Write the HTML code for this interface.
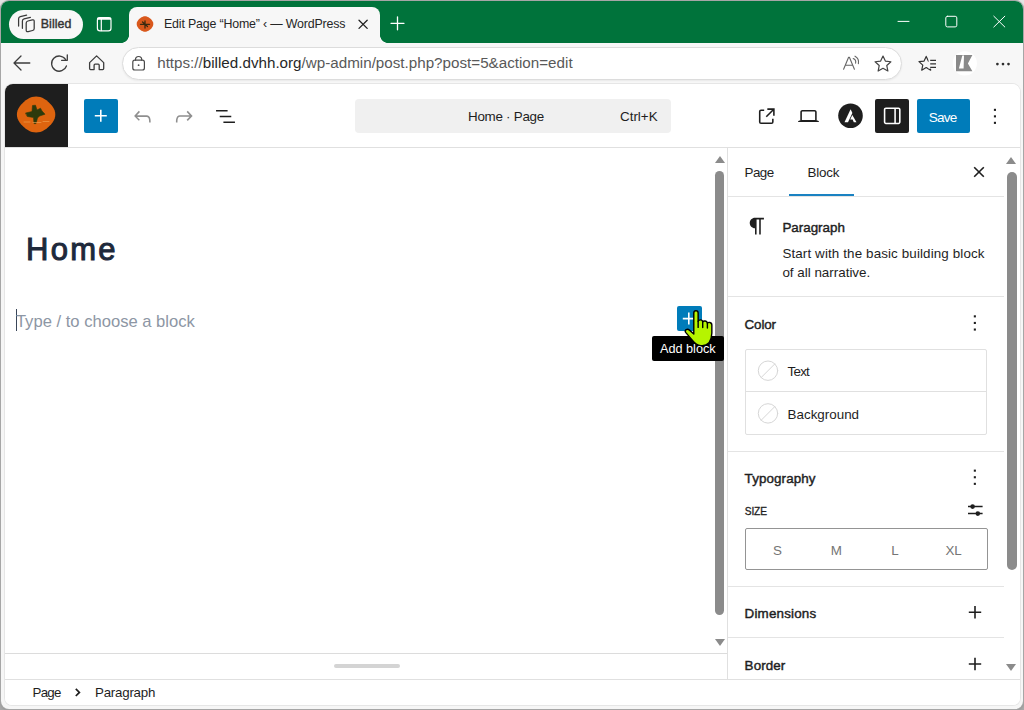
<!DOCTYPE html>
<html><head><meta charset="utf-8">
<style>
*{box-sizing:border-box;margin:0;padding:0}
html,body{width:1024px;height:710px;overflow:hidden;background:linear-gradient(#e4e4e4,#c0c0c0 20%,#a8a8a8);font-family:"Liberation Sans",sans-serif;}
.abs{position:absolute}
svg{position:absolute;overflow:visible}
#win{position:absolute;left:1px;top:1px;width:1021.6px;height:707.7px;border-radius:8px;background:#f6f6f6;overflow:hidden;box-shadow:0 0 0 1px #a6a6a6, 0 1px 2px 1px #999;}
/* coordinates inside #win are page coords minus 1 */
#title{left:0;top:0;width:100%;height:41.5px;background:#00733b;}
#pill{left:8px;top:8.9px;width:74px;height:29px;border-radius:14.5px;background:#f7f7f7;}
#pill span{position:absolute;left:31.7px;top:7.2px;font-size:12.4px;font-weight:normal;-webkit-text-stroke:.4px #333;color:#333;letter-spacing:.1px}
#tab{left:128px;top:6px;width:251px;height:37px;background:#f7f7f7;border-radius:8px 8px 0 0;}
#tab:before,#tab:after{content:"";position:absolute;bottom:1.5px;width:8px;height:8px;}
#tab:before{left:-8px;background:radial-gradient(circle at 0 0,transparent 7.6px,#f7f7f7 8.2px)}
#tab:after{right:-8px;background:radial-gradient(circle at 100% 0,transparent 7.6px,#f7f7f7 8.2px)}
#tabtxt{left:35px;top:10px;font-size:12.4px;color:#262626;white-space:nowrap;letter-spacing:-.17px}
#nav{left:0;top:41.5px;width:100%;height:42px;background:#f7f7f7}
#addr{left:121px;top:4.5px;width:780px;height:33px;border-radius:16.5px;background:#fff;border:1px solid #dcdcdc;box-shadow:0 1px 2px rgba(0,0,0,.06)}
#url{left:34.2px;top:5.7px;font-size:15.2px;color:#595959;white-space:nowrap}#url b{font-weight:normal;color:#272727}
#content{left:4px;top:83px;width:1014.5px;height:621.1px;background:#fff;border-radius:8px 8px 7px 7px;overflow:hidden;box-shadow:0 0 0 1px #e6e6e6;}
/* coordinates inside #content are page coords minus (5,84) */
#wphead{left:0;top:0;width:100%;height:64px;border-bottom:1px solid #e0e0e0;background:#fff}
#logo{left:0;top:0;width:62.7px;height:63px;background:#1e1e1e}
#plus{left:79px;top:15.2px;width:33.6px;height:33.4px;background:#007cba;border-radius:2px}
#cmd{left:349.5px;top:15.3px;width:316px;height:33.3px;background:#f0f0f0;border-radius:4px;font-size:13.4px;color:#1e1e1e;white-space:nowrap}
#save{left:911.8px;top:15.2px;width:52.9px;height:33.4px;background:#007cba;border-radius:2px;color:#fff;font-size:13.5px;letter-spacing:-.75px;text-align:center;line-height:37px;text-indent:-1.2px}
#sbbtn{left:870.3px;top:15.2px;width:33.7px;height:33.4px;background:#1e1e1e;border-radius:2px}
#h1{left:21px;top:148px;font-size:31px;font-weight:normal;-webkit-text-stroke:1px #1e293b;color:#1e293b;letter-spacing:2.3px;line-height:36px}
#ph{left:10.9px;top:227.8px;font-size:16.6px;color:#8d96a4;white-space:nowrap;line-height:20px}
#caret{left:10.6px;top:224.5px;width:1.2px;height:22px;background:#3a4658}
#ins{left:672px;top:222px;width:25px;height:25px;background:#007cba;border-radius:2px}
#tip{left:646.6px;top:251.6px;width:72.4px;height:25.6px;background:#000;border-radius:2px;color:#fff;font-size:12.7px;line-height:27.4px;text-align:center;white-space:nowrap}
#side{left:722px;top:64px;width:293px;height:532px;border-left:1px solid #e0e0e0;background:#fff}
/* coordinates inside #side are page coords minus (728,148) */
#foot1{left:0;top:568.5px;width:722px;height:27px;border-top:1px solid #dcdcdc;background:#fff}
#handle{left:329px;top:10.5px;width:66px;height:4px;border-radius:2px;background:#d4d4d4}
#foot2{left:0;top:595px;width:100%;height:27px;border-top:1px solid #e0e0e0;background:#fff;font-size:13.3px;color:#1e1e1e;white-space:nowrap}
.thumb{background:#8b8b8b;border-radius:5px}
.t{font-size:13.4px;color:#1e1e1e;white-space:nowrap;line-height:16px}
.b{font-weight:normal;-webkit-text-stroke:.42px #1e1e1e}
.hr{height:1px;background:#e4e4e4;left:0;width:276px}
.tri-u{width:0;height:0;border-left:5.2px solid transparent;border-right:5.2px solid transparent;border-bottom:7.5px solid #8b8b8b}
.tri-d{width:0;height:0;border-left:5.2px solid transparent;border-right:5.2px solid transparent;border-top:7.5px solid #8b8b8b}
</style></head><body>
<div id="win">
 <div id="title" class="abs">
  <div id="pill" class="abs"><span>Billed</span></div>
  <div id="tab" class="abs"><div id="tabtxt" class="abs">Edit Page “Home” ‹ — WordPress</div></div>
 </div>
 <div id="nav" class="abs">
  <div id="addr" class="abs"><div id="url" class="abs">https://<b>billed.dvhh.org</b>/wp-admin/post.php?post=5&amp;action=edit</div></div>
 </div>
 <div id="content" class="abs">
  <div id="wphead" class="abs">
   <div id="logo" class="abs"></div>
   <div id="plus" class="abs"></div>
   <div id="cmd" class="abs"><span class="abs" style="left:113.5px;top:9.5px;letter-spacing:-.27px">Home · Page</span><span class="abs" style="left:265.5px;top:9.5px">Ctrl+K</span></div>
   <div id="sbbtn" class="abs"></div>
   <div id="save" class="abs">Save</div>
  </div>
  <div id="h1" class="abs">Home</div>
  <div id="caret" class="abs"></div>
  <div id="ph" class="abs">Type / to choose a block</div>
  <div id="ins" class="abs"></div>
  <!-- canvas scrollbar -->
  <div class="abs tri-u" style="left:709.5px;top:71.5px"></div>
  <div class="abs thumb" style="left:710.3px;top:87px;width:8.8px;height:444px"></div>
  <div class="abs tri-d" style="left:709.5px;top:554.5px"></div>
  <div id="tip" class="abs">Add block</div>
  <div id="side" class="abs">
   <div class="abs t" style="left:16.6px;top:16.9px;letter-spacing:-.55px">Page</div>
   <div class="abs t" style="left:79.6px;top:16.9px;letter-spacing:-.25px">Block</div>
   <div class="abs" style="left:61px;top:46.4px;width:65px;height:2.3px;background:#1a82c2"></div>
   <div class="abs hr" style="top:48px"></div>
   <div class="abs t b" style="left:54.4px;top:72px;letter-spacing:0px">Paragraph</div>
   <div class="abs t" style="left:54.4px;top:97.5px;letter-spacing:.12px">Start with the basic building block</div>
   <div class="abs t" style="left:54.4px;top:116.6px">of all narrative.</div>
   <div class="abs hr" style="top:148px"></div>
   <div class="abs t b" style="left:16.6px;top:168.6px;letter-spacing:-.15px">Color</div>
   <div class="abs" style="left:17px;top:201px;width:242px;height:85.5px;border:1px solid #e0e0e0;border-radius:2px"></div>
   <div class="abs" style="left:17px;top:243px;width:242px;height:1px;background:#e0e0e0"></div>
   <div class="abs t" style="left:59.6px;top:216.2px;letter-spacing:-.8px">Text</div>
   <div class="abs t" style="left:59.6px;top:259.2px">Background</div>
   <div class="abs hr" style="top:302.5px"></div>
   <div class="abs t b" style="left:16.6px;top:322.5px;letter-spacing:.1px">Typography</div>
   <div class="abs t b" style="left:16.8px;top:356.1px;font-size:10.2px;letter-spacing:-.15px;-webkit-text-stroke-width:.3px">SIZE</div>
   <div class="abs" style="left:16.7px;top:380px;width:243px;height:41.7px;border:1px solid #949494;border-radius:2px"></div>
   <div class="abs t" style="left:29.5px;top:394.8px;width:40px;text-align:center;color:#757575">S</div>
   <div class="abs t" style="left:88.4px;top:394.8px;width:40px;text-align:center;color:#757575">M</div>
   <div class="abs t" style="left:147px;top:394.8px;width:40px;text-align:center;color:#757575">L</div>
   <div class="abs t" style="left:205.6px;top:394.8px;width:40px;text-align:center;color:#757575">XL</div>
   <div class="abs hr" style="top:438px"></div>
   <div class="abs t b" style="left:16.6px;top:457.7px;letter-spacing:.17px">Dimensions</div>
   <div class="abs hr" style="top:489px"></div>
   <div class="abs t b" style="left:16.6px;top:509.7px;letter-spacing:.1px">Border</div>
   <!-- sidebar scrollbar -->
   <div class="abs tri-u" style="left:278.4px;top:8.6px"></div>
   <div class="abs thumb" style="left:279px;top:24.4px;width:9.6px;height:397.6px"></div>
   <div class="abs tri-d" style="left:278.4px;top:516px"></div>
  </div>
  <div id="foot1" class="abs"><div id="handle" class="abs"></div></div>
  <div id="foot2" class="abs"><span class="abs" style="left:27.5px;top:5px;letter-spacing:-.7px">Page</span><span class="abs" style="left:90px;top:5px;letter-spacing:-.22px">Paragraph</span></div>
 </div>
</div>
<svg id="ov" width="1024" height="710" viewBox="0 0 1024 710" style="left:0;top:0;z-index:5" fill="none" stroke-linecap="round" stroke-linejoin="round">
<g stroke="#3a3a3a" stroke-width="1.25" transform="translate(0,.5)">
<path d="M26.2,22.6 Q26.2,20.9 27.9,20.5 L32.3,19.4 Q34.2,19 34.2,20.8 V28 Q34.2,29.6 32.6,30 L28.2,31.1 Q26.2,31.5 26.2,29.7 Z"/>
<path d="M22.4,27.8 V20.4 Q22.4,18.7 24.1,18.3 L30.4,16.8"/>
<path d="M18.6,25.6 V18.2 Q18.6,16.5 20.3,16.1 L26.6,14.7"/>
</g>
<g stroke="#fff" stroke-width="1.2"><rect x="97.4" y="17.6" width="13.6" height="13.2" rx="2.6"/><path d="M101.3,19V30.6"/><path d="M98.2,18.6H110.2" stroke-width="2.2"/></g>
<path d="M150.54,29.14 L149.48,30.04 L148.59,30.66 L147.70,31.12 L146.80,31.44 L145.90,31.64 L145.00,31.70 L144.10,31.64 L143.20,31.44 L142.30,31.12 L141.41,30.66 L140.52,30.04 L139.46,29.14 L138.48,28.16 L137.82,27.33 L137.33,26.50 L136.98,25.67 L136.77,24.84 L136.70,24.00 L136.77,23.16 L136.98,22.33 L137.33,21.50 L137.82,20.67 L138.48,19.84 L139.46,18.86 L140.52,17.96 L141.41,17.34 L142.30,16.88 L143.20,16.56 L144.10,16.36 L145.00,16.30 L145.90,16.36 L146.80,16.56 L147.70,16.88 L148.59,17.34 L149.48,17.96 L150.54,18.86 L151.52,19.84 L152.18,20.67 L152.67,21.50 L153.02,22.33 L153.23,23.16 L153.30,24.00 L153.23,24.84 L153.02,25.67 L152.67,26.50 L152.18,27.33 L151.52,28.16Z" fill="#d9581c" stroke="none"/>
<path d="M140.5,24.3H149.5M145,21V28M142.5,22 L147.5,26.5" stroke="#3a2a10" stroke-width="1.3"/>
<path d="M359,20.2 L367.2,28.4 M367.2,20.2 L359,28.4" stroke="#1f1f1f" stroke-width="1.25"/>
<path d="M391,23.3H404 M397.5,16.8V29.8" stroke="#fff" stroke-width="1.3"/>
<g stroke="#fff" stroke-width="1"><path d="M898,21.4H909"/><rect x="945.8" y="16.3" width="11" height="10.6" rx="1.6"/><path d="M993.8,16.2 L1004.8,27 M1004.8,16.2 L993.8,27"/></g>
<g stroke="#3d3d3d" stroke-width="1.3">
<path d="M14.2,63H29.8 M21,56 L14,63 L21,70"/>
<path d="M65.65,59.57 A7.6,7.6 0 1 0 66.43,65.95"/>
<path d="M61.6,60.3H67.3V54.8"/>
<path d="M89.6,62.6 L96.6,55.9 L103.7,62.6 V68.6 Q103.7,69.6 102.7,69.6 H99.2 V65.2 Q99.2,64.2 98.2,64.2 H95.1 Q94.1,64.2 94.1,65.2 V69.6 H90.6 Q89.6,69.6 89.6,68.6 Z"/>
</g>
<g stroke="#4a4a4a" stroke-width="1.2"><rect x="132.8" y="60.2" width="11.6" height="9.8" rx="2"/><path d="M135.5,60.2V59.6 A3.1,3.1 0 0 1 141.7,59.6 V60.2"/><circle cx="138.6" cy="65.2" r=".9" fill="#4a4a4a" stroke="none"/></g>
<g stroke="#666" stroke-width="1.1"><path d="M843.6,69.2 L848.6,57.2 H849.4 L854.4,69.2 M845.4,65.2H852.6"/><path d="M853.2,58.6 A4,4 0 0 1 855.6,63.2"/><path d="M855,56.2 A7,7 0 0 1 858.4,63.6"/></g>
<path d="M883.00,56.00 L885.35,61.06 L890.89,61.74 L886.80,65.54 L887.88,71.01 L883.00,68.30 L878.12,71.01 L879.20,65.54 L875.11,61.74 L880.65,61.06Z" stroke="#444" stroke-width="1.2"/>
<path d="M926.20,56.40 L928.32,61.09 L933.43,61.65 L929.62,65.11 L930.67,70.15 L926.20,67.60 L921.73,70.15 L922.78,65.11 L918.97,61.65 L924.08,61.09Z" stroke="#333" stroke-width="1.2"/>
<rect x="928.6" y="58.4" width="9" height="10.2" fill="#f7f7f7" stroke="none"/>
<path d="M930.2,60.3H936 M930.2,63.8H936 M930.2,67.3H936" stroke="#333" stroke-width="1.2" stroke-linecap="butt"/>
<circle cx="964.8" cy="63.4" r="12.1" fill="#fff" stroke="none"/>
<path d="M956,55H972.4L967.9,63.6L972.4,71.2H956Z M962.3,55.6H964L963.6,68.6H958.9Z" fill="#8a8a8a" fill-rule="evenodd" stroke="none"/>
<g fill="#2e2e2e" stroke="none"><circle cx="997.4" cy="64.1" r="1.35"/><circle cx="1003" cy="64.1" r="1.35"/><circle cx="1008.5" cy="64.1" r="1.35"/></g>
<path d="M48.91,126.51 L46.47,128.63 L44.39,130.07 L42.34,131.14 L40.28,131.90 L38.19,132.35 L36.10,132.50 L34.01,132.35 L31.92,131.90 L29.86,131.14 L27.81,130.07 L25.73,128.63 L23.29,126.51 L21.03,124.23 L19.50,122.28 L18.35,120.35 L17.54,118.41 L17.06,116.46 L16.90,114.50 L17.06,112.54 L17.54,110.59 L18.35,108.65 L19.50,106.72 L21.03,104.77 L23.29,102.49 L25.73,100.37 L27.81,98.93 L29.86,97.86 L31.92,97.10 L34.01,96.65 L36.10,96.50 L38.19,96.65 L40.28,97.10 L42.34,97.86 L44.39,98.93 L46.47,100.37 L48.91,102.49 L51.17,104.77 L52.70,106.72 L53.85,108.65 L54.66,110.59 L55.14,112.54 L55.30,114.50 L55.14,116.46 L54.66,118.41 L53.85,120.35 L52.70,122.28 L51.17,124.23Z" fill="#de640f" stroke="none"/>
<path d="M25.8,113 L32,111.5 L32.5,105.5 L35.5,105.2 L37,110 L40.5,108.2 L42,111 L45,114.2 L39.5,116 L37.5,118 L36,123.6 L34,123.6 L33.5,117.5 L27.5,116.5 Z" fill="#2c3a0c" stroke="#2c3a0c" stroke-width=".6"/>
<path d="M24,122H30M33,122.5H41M43,121.5H49" stroke="#f0a050" stroke-width=".8" opacity=".8"/>
<path d="M94.8,115.8H106.8 M100.8,109.8V121.8" stroke="#fff" stroke-width="1.6" stroke-linecap="butt"/>
<g fill="#8f8f8f" stroke="none"><path transform="translate(129.9,104) scale(1.05)" d="M18.3 11.7c-.6-.6-1.4-.9-2.300-.9H6.700l2.900-3.300-1.100-1-4.500 5L8.500 16l1-1-2.700-2.700H16c.5 0 .9.2 1.300.5 1 1 1 3.400 1 4.500v.3h1.500v-.2c0-1.500 0-4.300-1.500-5.700z"/>
<path transform="translate(171.4,104) scale(1.05)" d="M15.600 6.500l-1.100 1 2.900 3.300H8c-.9 0-1.700.3-2.300.9-1.400 1.500-1.400 4.200-1.400 5.600v.2h1.500v-.3c0-1.100 0-3.500 1-4.500.3-.3.700-.5 1.300-.5h9.200L14.500 15l1.100 1.100 4.600-4.600-4.600-5z"/></g>
<g fill="#1e1e1e" stroke="none"><path transform="translate(212.9,103.6) scale(1.05)" d="M3 6h11v1.500H3V6Zm3.500 5.500h11V13h-11v-1.500ZM21 17H10v1.500h11V17Z"/>
<path transform="translate(754.2,103.6) scale(1.05)" d="M19.500 4.500h-7V6h4.440l-5.970 5.970 1.060 1.060L18 7.060v4.440h1.500v-7Zm-13 1a2 2 0 0 0-2 2v10a2 2 0 0 0 2 2h10a2 2 0 0 0 2-2v-3H17v3a.5.5 0 0 1-.5.500h-10a.5.5 0 0 1-.5-.5v-10a.5.5 0 0 1 .5-.5h3V5.500h-3Z"/>
<path transform="translate(795.9,103.6) scale(1.05)" d="M20.500 16h-.7V8c0-1.100-.9-2-2-2H6.200c-1.100 0-2 .9-2 2v8h-.7c-.8 0-1.500.7-1.500 1.500h20c0-.8-.7-1.500-1.500-1.500zM5.700 8c0-.3.200-.5.500-.5h11.600c.3 0 .5.200.5.500v7.600H5.700V8z"/>
<circle cx="850.5" cy="115.8" r="12.3"/>
<rect x="993.9" y="108.8" width="2.1" height="2.1"/><rect x="993.9" y="115.3" width="2.1" height="2.1"/><rect x="993.9" y="121.8" width="2.1" height="2.1"/>
</g>
<g fill="#fff" stroke="none"><path d="M844.5,122.3 L850.6,109.2 L852.4,113 L848,122.3Z"/><path d="M852.3,114.9 L856.5,122.3 H853.8 L852.6,119.6 H850.2Z"/>
<path transform="translate(879.6,103.2) scale(1.05)" d="M18 4H6c-1.100 0-2 .9-2 2v12c0 1.100.9 2 2 2h12c1.100 0 2-.9 2-2V6c0-1.100-.9-2-2-2zm-4 14.500H6c-.3 0-.5-.2-.5-.5V6c0-.3.200-.5.500-.5h8v13zm4.500-.5c0 .3-.2.500-.5.500h-2.500v-13H18c.3 0 .5.200.5.500v12z"/></g>
<path d="M682.8,318.6H694.8 M688.8,312.6V324.6" stroke="#fff" stroke-width="1.6" stroke-linecap="butt"/>
<path d="M974.2,167.2 L983.8,176.8 M983.8,167.2 L974.2,176.8" stroke="#1e1e1e" stroke-width="1.6" stroke-linecap="butt"/>
<g fill="#1e1e1e" stroke="none"><path transform="translate(744.5,213.6) scale(1.05)" d="M9.996 14v-.2251l.004.0001v6.225h1.500v-14.500h2.500v14.500h1.500v-14.500h3v-1.500h-8.504c-2.761 0-5 2.239-5 5 0 2.761 2.239 5 5 5z"/>
<rect x="973.8" y="315.3" width="2.1" height="2.1"/>
<rect x="973.8" y="321.9" width="2.1" height="2.1"/>
<rect x="973.8" y="328.5" width="2.1" height="2.1"/>
<rect x="973.8" y="469.6" width="2.1" height="2.1"/>
<rect x="973.8" y="476.2" width="2.1" height="2.1"/>
<rect x="973.8" y="482.8" width="2.1" height="2.1"/>
</g>
<g stroke="#d6d6d6" stroke-width="1"><circle cx="768" cy="370.7" r="9.7" fill="#fff"/><path d="M761.2,377.5 L774.8,363.9"/></g>
<g stroke="#d6d6d6" stroke-width="1"><circle cx="768" cy="413.4" r="9.7" fill="#fff"/><path d="M761.2,420.2 L774.8,406.59999999999997"/></g>
<g stroke="#1e1e1e" stroke-width="1.5" stroke-linecap="butt"><path d="M968,506.6H982.6 M968,513.6H982.6"/><circle cx="972.6" cy="506.6" r="2.3" fill="#1e1e1e" stroke="none"/><circle cx="977.8" cy="513.6" r="2.3" fill="#1e1e1e" stroke="none"/></g>
<path d="M968.8,612.2H981.2 M975,606V618.4 M968.8,664H981.2 M975,657.8V670.2" stroke="#1e1e1e" stroke-width="1.6" stroke-linecap="butt"/>
<path d="M75.8,688.8 L79.4,692.4 L75.8,696" stroke="#1e1e1e" stroke-width="1.7" stroke-linecap="butt" stroke-linejoin="miter"/>
<g transform="translate(640,295) scale(0.1056) translate(530,150) scale(1.03,1.045) translate(-530,-150)" stroke="#000" stroke-width="13" fill="#b6f400"><path d="M510,170 Q510,150 530,150 Q550,150 550,170 L550,245 Q555,232 572,232 Q590,232 592,250 Q598,240 615,242 Q632,244 635,262 Q642,252 658,255 Q676,258 676,280 L676,350 Q676,400 650,440 Q620,470 575,465 Q530,460 500,420 L435,345 Q425,330 440,320 Q455,312 470,325 L510,360 Z"/><path d="M550,245V300 M592,250V302 M635,262V305" fill="none"/></g>
</svg>
</body></html>
